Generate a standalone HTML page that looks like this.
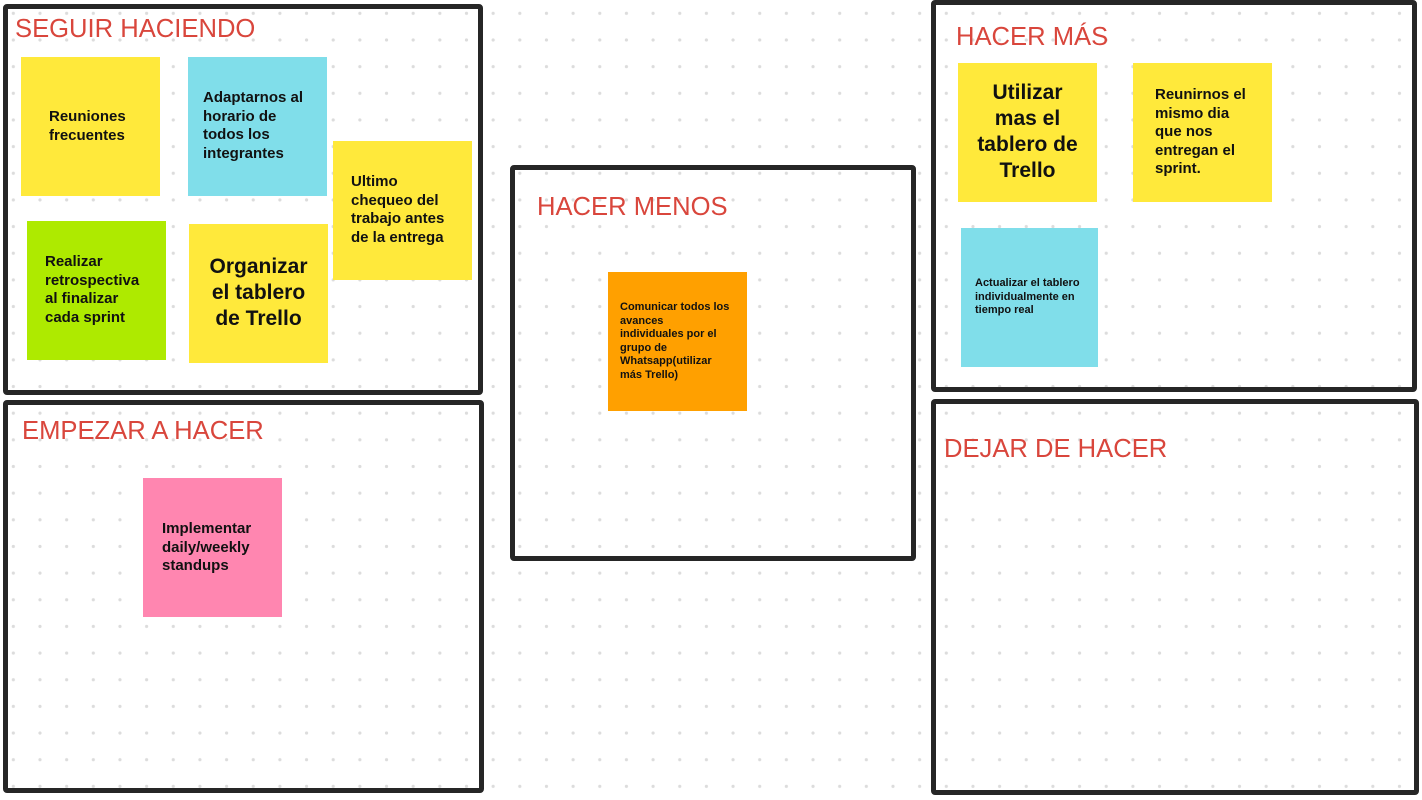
<!DOCTYPE html>
<html><head><meta charset="utf-8"><style>
html,body{margin:0;padding:0}
body{width:1422px;height:800px;position:relative;overflow:hidden;background-color:#fff;
background-image:radial-gradient(circle,#dcdcdc 1.5px,transparent 1.8px);
background-size:26.667px 26.667px;background-position:0px 0px;font-family:"Liberation Sans",sans-serif}
.box{position:absolute;border:5px solid #262626;border-radius:4px;box-sizing:border-box}
.t{position:absolute;color:#d9463c;font-size:25.6px;white-space:nowrap}
.s{position:absolute;width:139px;height:139px;box-sizing:border-box;font-weight:bold;color:#111;font-size:15px;line-height:18.5px}
.y{background:#ffe93b}.c{background:#80deea}.g{background:#aeea00}.p{background:#ff86b0}.o{background:#ffa000}
.s div{position:absolute}
</style></head><body>
<div class="box" style="left:3px;top:4px;width:480px;height:391px"></div>
<div class="box" style="left:3px;top:400px;width:481px;height:393px"></div>
<div class="box" style="left:510px;top:165px;width:406px;height:396px"></div>
<div class="box" style="left:931px;top:0px;width:486px;height:392px"></div>
<div class="box" style="left:931px;top:399px;width:488px;height:396px"></div>

<div class="t" style="left:15px;top:15px">SEGUIR HACIENDO</div>
<div class="t" style="left:22px;top:417px">EMPEZAR A HACER</div>
<div class="t" style="left:537px;top:193px">HACER MENOS</div>
<div class="t" style="left:956px;top:23px">HACER MÁS</div>
<div class="t" style="left:944px;top:435px">DEJAR DE HACER</div>

<div class="s y" style="left:21px;top:57px"><div style="left:28px;top:51px">Reuniones<br>frecuentes</div></div>
<div class="s c" style="left:188px;top:57px"><div style="left:15px;top:32px">Adaptarnos al<br>horario de<br>todos los<br>integrantes</div></div>
<div class="s y" style="left:333px;top:141px"><div style="left:18px;top:32px">Ultimo<br>chequeo del<br>trabajo antes<br>de la entrega</div></div>
<div class="s g" style="left:27px;top:221px"><div style="left:18px;top:32px">Realizar<br>retrospectiva<br>al finalizar<br>cada sprint</div></div>
<div class="s y" style="left:189px;top:224px;font-size:21px;line-height:26px"><div style="left:0;width:139px;text-align:center;top:30px">Organizar<br>el tablero<br>de Trello</div></div>
<div class="s p" style="left:143px;top:478px"><div style="left:19px;top:42px">Implementar<br>daily/weekly<br>standups</div></div>
<div class="s o" style="left:608px;top:272px;font-size:11px;line-height:13.5px"><div style="left:12px;top:29px">Comunicar todos los<br>avances<br>individuales por el<br>grupo de<br>Whatsapp(utilizar<br>más Trello)</div></div>
<div class="s y" style="left:958px;top:63px;font-size:21px;line-height:26px"><div style="left:0;width:139px;text-align:center;top:17px">Utilizar<br>mas el<br>tablero de<br>Trello</div></div>
<div class="s y" style="left:1133px;top:63px"><div style="left:22px;top:23px">Reunirnos el<br>mismo dia<br>que nos<br>entregan el<br>sprint.</div></div>
<div class="s c" style="left:961px;top:228px;width:137px;font-size:11px;line-height:13.5px"><div style="left:14px;top:49px">Actualizar el tablero<br>individualmente en<br>tiempo real</div></div>
</body></html>
